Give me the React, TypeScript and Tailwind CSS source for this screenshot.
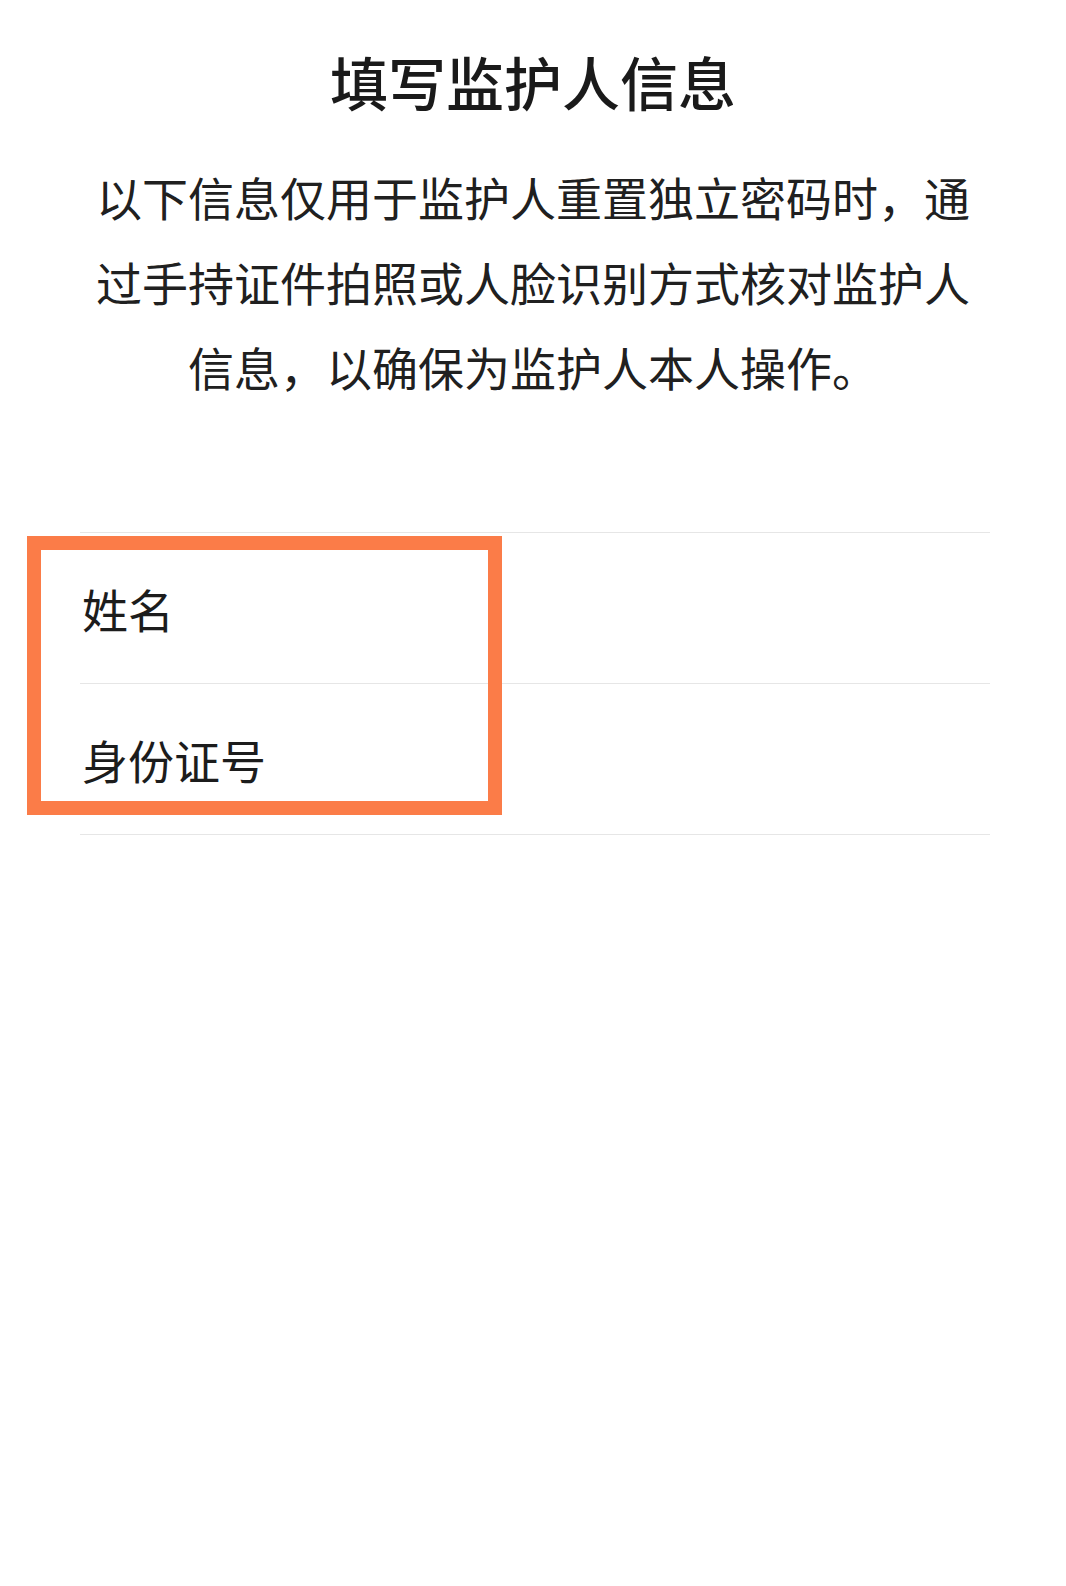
import React from 'react';

const font = { fontFamily: '"Noto Sans CJK SC", "Noto Sans", sans-serif' };

function FieldRow({ label }: { label: string }) {
  return (
    <div className="flex h-[151px] items-center border-t border-[#e6e6e6] pl-[2px]">
      <span className="text-[46px] leading-none text-[#1c1c1c]">{label}</span>
    </div>
  );
}

export default function App() {
  return (
    <div className="relative min-h-[1586px] w-full bg-white" style={font}>
      <h1 className="pt-[52px] text-center text-[58px] font-medium leading-none text-[#1a1a1a]">
        填写监护人信息
      </h1>
      <p className="mx-auto mt-[44px] w-[880px] text-center text-[46px] leading-[85px] text-[#202020]">
        以下信息仅用于监护人重置独立密码时，通过手持证件拍照或人脸识别方式核对监护人信息，以确保为监护人本人操作。
      </p>

      <div className="ml-[80px] mt-[123px] w-[910px] border-b border-[#e6e6e6]">
        <FieldRow label="姓名" />
        <FieldRow label="身份证号" />
      </div>

      {/* annotation highlight drawn over the form */}
      <div className="pointer-events-none absolute left-[27px] top-[536px] h-[279px] w-[475px] border-[14px] border-[#fb7c48]" />
    </div>
  );
}
